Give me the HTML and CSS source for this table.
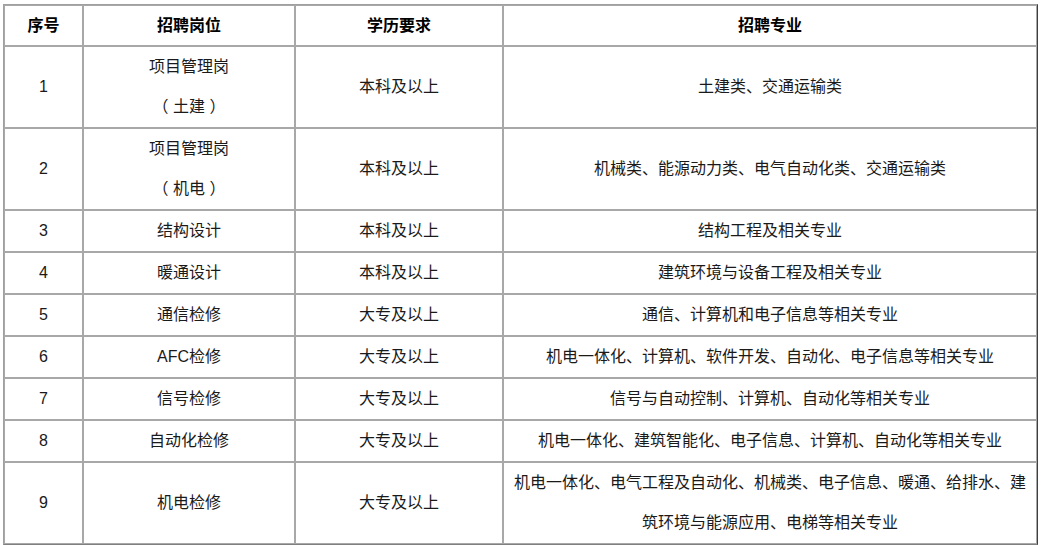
FILE: index.html
```html
<!DOCTYPE html>
<html lang="zh-CN">
<head>
<meta charset="utf-8">
<title>招聘岗位</title>
<link rel="stylesheet" href="styles.css">
</head>
<body>
<table class="jobs">
  <colgroup>
    <col class="c1"><col class="c2"><col class="c3"><col class="c4">
  </colgroup>
  <thead>
    <tr><th>序号</th><th>招聘岗位</th><th>学历要求</th><th>招聘专业</th></tr>
  </thead>
  <tbody>
    <tr><td>1</td><td>项目管理岗<br>（ 土建 ）</td><td>本科及以上</td><td>土建类、交通运输类</td></tr>
    <tr><td>2</td><td>项目管理岗<br>（ 机电 ）</td><td>本科及以上</td><td>机械类、能源动力类、电气自动化类、交通运输类</td></tr>
    <tr><td>3</td><td>结构设计</td><td>本科及以上</td><td>结构工程及相关专业</td></tr>
    <tr><td>4</td><td>暖通设计</td><td>本科及以上</td><td>建筑环境与设备工程及相关专业</td></tr>
    <tr><td>5</td><td>通信检修</td><td>大专及以上</td><td>通信、计算机和电子信息等相关专业</td></tr>
    <tr><td>6</td><td>AFC检修</td><td>大专及以上</td><td>机电一体化、计算机、软件开发、自动化、电子信息等相关专业</td></tr>
    <tr><td>7</td><td>信号检修</td><td>大专及以上</td><td>信号与自动控制、计算机、自动化等相关专业</td></tr>
    <tr><td>8</td><td>自动化检修</td><td>大专及以上</td><td>机电一体化、建筑智能化、电子信息、计算机、自动化等相关专业</td></tr>
    <tr><td>9</td><td>机电检修</td><td>大专及以上</td><td>机电一体化、电气工程及自动化、机械类、电子信息、暖通、给排水、建筑环境与能源应用、电梯等相关专业</td></tr>
  </tbody>
</table>
</body>
</html>
```

FILE: styles.css
```css
html, body {
  margin: 0;
  padding: 0;
  background: #fff;
}
body {
  padding: 4px 3px;
  font-family: "Liberation Sans", "Noto Sans CJK SC", sans-serif;
  font-size: 16px;
  color: #1a1a1a;
}
.jobs {
  width: 1035px;
  table-layout: fixed;
  border-collapse: separate;
  border-spacing: 0;
  border-top: 1px solid #a0a0a0;
  border-left: 1px solid #a0a0a0;
  border-right: 1px solid #404040;
  border-bottom: 1px solid #808080;
}
.c1 { width: 79px; }
.c2 { width: 212px; }
.c3 { width: 208px; }
.c4 { width: auto; }
.jobs th, .jobs td {
  border: 1px solid #a8a8a8;
  padding: 0 8px;
  line-height: 40px;
  text-align: center;
  vertical-align: middle;
  font-weight: normal;
}
.jobs th {
  font-weight: bold;
  color: #000;
  line-height: 39px;
}
```
